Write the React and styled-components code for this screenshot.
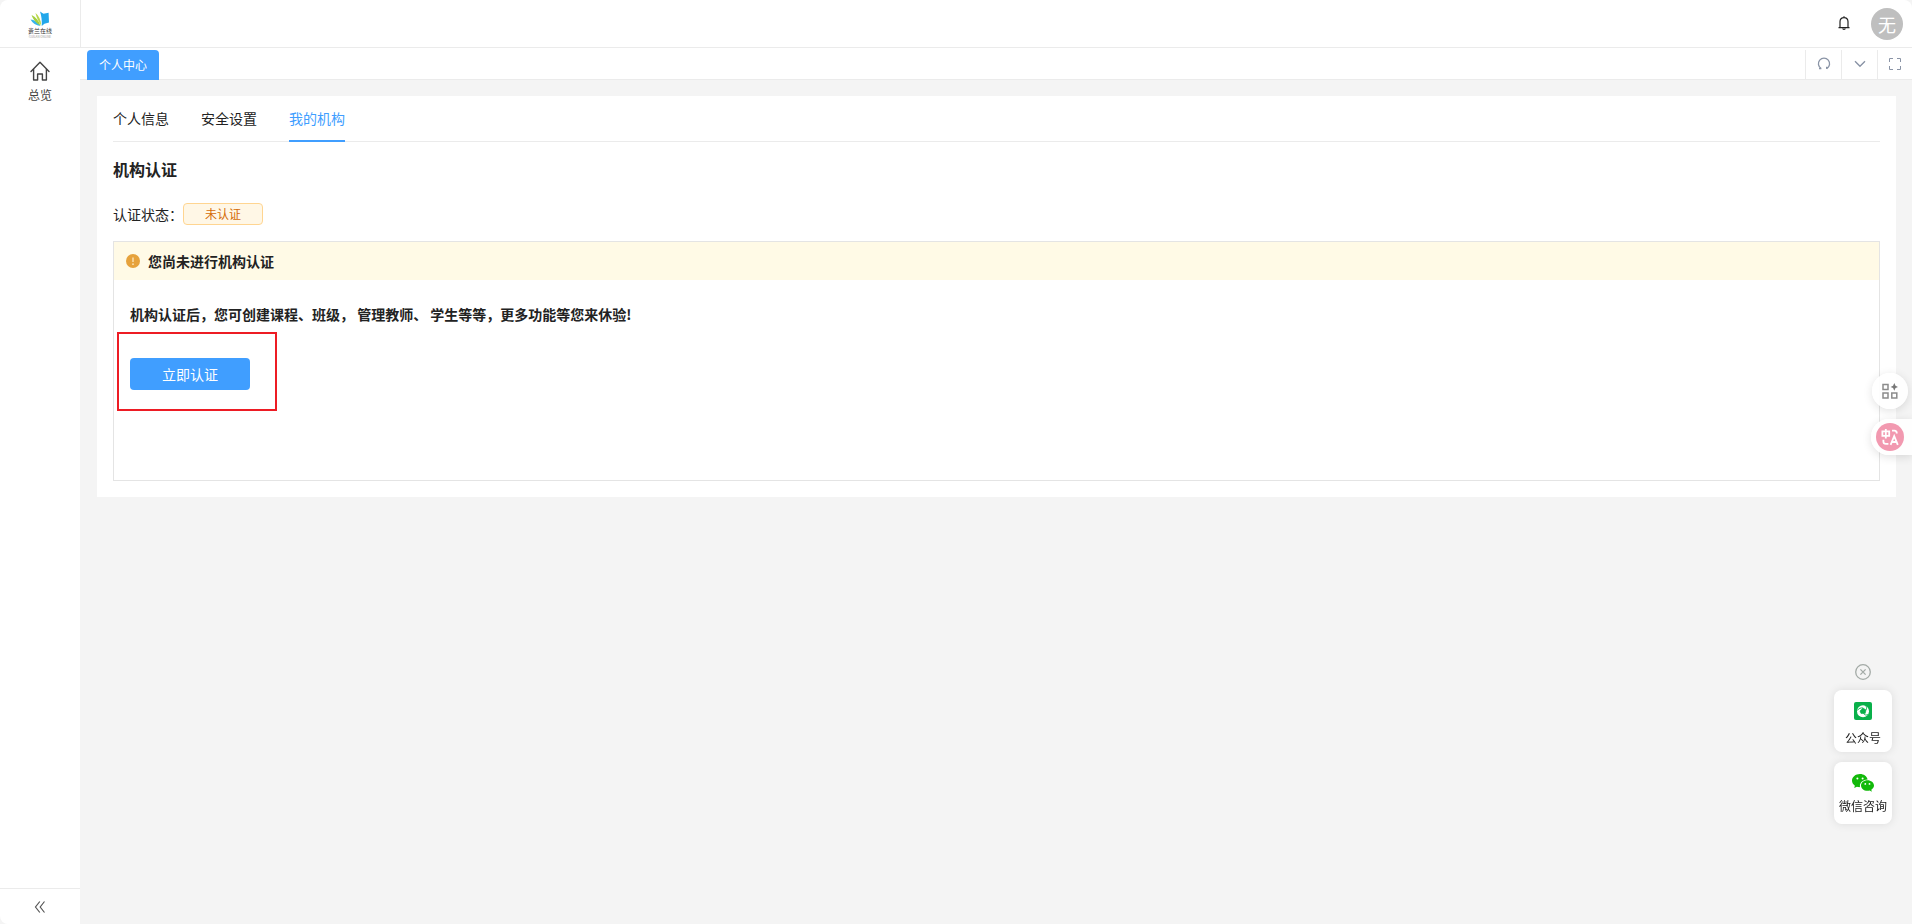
import styled, { createGlobalStyle } from "styled-components";

const tools = [
	{ name: "刷新", icon: <RefreshIcon /> },
	{ name: "更多", icon: <ChevronIcon /> },
	{ name: "全屏", icon: <FullscreenIcon /> },
];

const tabs = ["个人信息", "安全设置", "我的机构"];

const App = () => {
	return (
		<>
			<GlobalStyle />
			<Layout>
				<Sidebar>
					<LogoBox href="#">
						<LogoIcon />
						<LogoName>贵兰在线</LogoName>
						<LogoSub>GUILAN ONLINE</LogoSub>
					</LogoBox>
					<MenuItem href="#">
						<HomeIcon />
						总览
					</MenuItem>
					<CollapseButton aria-label="收起菜单">
						<CollapseIcon />
					</CollapseButton>
				</Sidebar>
				<Main>
					<Header>
						<IconButton aria-label="通知">
							<BellIcon />
						</IconButton>
						<Avatar>无</Avatar>
					</Header>
					<PageBar>
						<PageTab href="#">个人中心</PageTab>
						<Tools>
							{tools.map((tool) => (
								<ToolButton key={tool.name} aria-label={tool.name}>
									{tool.icon}
								</ToolButton>
							))}
						</Tools>
					</PageBar>
					<Content>
						<Card>
							<Tabs>
								{tabs.map((tab) => (
									<Tab key={tab} $active={tab === "我的机构"}>
										{tab}
									</Tab>
								))}
							</Tabs>
							<Title>机构认证</Title>
							<Status>
								认证状态：
								<Tag>未认证</Tag>
							</Status>
							<Panel>
								<Notice>
									<WarningIcon />
									您尚未进行机构认证
								</Notice>
								<PanelBody>
									<Message>
										机构认证后，您可创建课程、班级， 管理教师、 学生等等，更多功能等您来休验!
									</Message>
									<Action>
										<PrimaryButton>立即认证</PrimaryButton>
										<Highlight />
									</Action>
								</PanelBody>
							</Panel>
						</Card>
					</Content>
				</Main>
			</Layout>
			<SideTools>
				<RoundButton aria-label="小工具">
					<AppsIcon />
				</RoundButton>
				<TranslateButton aria-label="翻译">
					<TranslateIcon />
				</TranslateButton>
			</SideTools>
			<Contact>
				<IconButton aria-label="关闭">
					<CloseIcon />
				</IconButton>
				<ContactButton $gap={8}>
					<OfficialIcon />
					公众号
				</ContactButton>
				<ContactButton $gap={4}>
					<WechatIcon />
					微信咨询
				</ContactButton>
			</Contact>
		</>
	);
};

export default App;

function LogoIcon() {
	return (
		<svg width="20" height="16" viewBox="0 0 20 16">
			<path d="M0.5 8.6 C4 9 8 11 10.4 15 C6 14.8 2.500 12.500 0.500 8.600Z" fill="#35b4ea" />
			<path d="M1.600 4 C5.500 6 9 10 10.600 14.600 C6.500 12.500 3 8.500 1.600 4Z" fill="#a4cf3e" />
			<path d="M5.500 2 C8.800 4.600 11 9 11.200 14.400 C8.600 11 6.400 6.500 5.500 2Z" fill="#b9d84a" />
			<path d="M10 0.500 L13.500 2.800 L18.600 1.800 L19 11.600 L14.400 12.800 L11.800 15 C12 10 11.600 5 10 0.500Z" fill="#22a7ea" />
		</svg>
	);
}

function HomeIcon() {
	return (
		<svg width="20" height="20" viewBox="0 0 20 20" fill="none" stroke="#444" strokeWidth="1.4" strokeLinejoin="round" strokeLinecap="round">
			<path d="M1 10.4 L10 1.2 L19 10.4" />
			<path d="M3.6 8.5 V19 H7.6 V13 H12.4 V19 H16.4 V8.5" />
		</svg>
	);
}

function CollapseIcon() {
	return (
		<svg width="12" height="12" viewBox="0 0 12 12" fill="none" stroke="#555" strokeWidth="1.2">
			<path d="M5.8 0.5 L1.5 6 L5.8 11.5 M10.5 0.5 L6.2 6 L10.5 11.5" />
		</svg>
	);
}

function BellIcon() {
	return (
		<svg width="12" height="16" viewBox="0 0 12 16" fill="none" stroke="#222" strokeWidth="1.2">
			<path d="M2 11.400 V5.800 C2 3.200 3.800 1.600 6 1.600 S10 3.200 10 5.800 V11.400 M0.500 11.600 H11.500 M6 0.200 V1.600 M4.600 12.600 C5 13.600 7 13.600 7.400 12.600" />
		</svg>
	);
}

function RefreshIcon() {
	return (
		<svg width="14" height="14" viewBox="0 0 14 14" fill="none" stroke="#8a94a6" strokeWidth="1.3">
			<path d="M4.200 11.600 A5.600 5.600 0 1 1 9.800 11.600 M2 11.700 H4.400 M9.700 9.800 V12" />
		</svg>
	);
}

function ChevronIcon() {
	return (
		<svg width="12" height="8" viewBox="0 0 12 8" fill="none" stroke="#8a94a6" strokeWidth="1.4">
			<path d="M1 1.2 L6 6.2 L11 1.2" />
		</svg>
	);
}

function FullscreenIcon() {
	return (
		<svg width="12" height="12" viewBox="0 0 12 12" fill="none" stroke="#8a94a6" strokeWidth="1">
			<path d="M0.5 4 V0.5 H4 M8 0.5 H11.5 V4 M11.5 8 V11.5 H8 M4 11.5 H0.5 V8" />
		</svg>
	);
}

function WarningIcon() {
	return (
		<svg width="14" height="14" viewBox="0 0 14 14">
			<circle cx="7" cy="7" r="7" fill="#e6a23c" />
			<path d="M7 3.4 V8" stroke="#fbe3b5" strokeWidth="1.4" />
			<circle cx="7" cy="10.2" r="0.9" fill="#fbe3b5" />
		</svg>
	);
}

function AppsIcon() {
	return (
		<svg width="16" height="16" viewBox="0 0 16 16" fill="none" stroke="#8c8c8c" strokeWidth="1.5">
			<path d="M1 1.400 H6 V6.400 H1 Z M1 10 H6 V15 H1 Z M9.800 10 H14.800 V15 H9.800 Z" />
			<path d="M12.300 0 L13.500 2.700 L16 3.900 L13.500 5.100 L12.300 7.800 L11.100 5.100 L8.600 3.900 L11.100 2.700 Z" fill="#777" stroke="none" />
		</svg>
	);
}

function TranslateIcon() {
	return (
		<svg width="28" height="28" viewBox="0 0 28 28" fill="none" stroke="#fff" strokeWidth="1.8">
			<circle cx="14" cy="14" r="14" fill="#f299b0" stroke="none" />
			<path d="M6.400 8.400 H13.200 V12.800 H6.400 Z M9.800 6 V15.600" />
			<path d="M16 7.600 H18.400 Q20.800 7.600 20.800 10.400 M7.400 16.800 V18.400 Q7.400 20.800 10 20.800 H12.400" />
			<path d="M14.600 21.800 L18.200 13.200 L21.800 21.800 M16 19 H20.400" />
		</svg>
	);
}

function CloseIcon() {
	return (
		<svg width="16" height="16" viewBox="0 0 16 16" fill="none" stroke="#a3aaa6" strokeWidth="1.3">
			<circle cx="8" cy="8" r="7.300" />
			<path d="M5.400 5.400 L10.600 10.600 M10.600 5.400 L5.400 10.600" />
		</svg>
	);
}

function OfficialIcon() {
	return (
		<svg width="18" height="18" viewBox="0 0 18 18">
			<rect width="18" height="18" rx="2" fill="#09b04a" />
			<circle cx="9" cy="9.200" r="6" fill="#fff" />
			<path d="M9 6 L12 8 L11.200 11.400 H7 L6 9 Z" fill="#09b04a" stroke="#09b04a" strokeWidth="0.600" strokeLinejoin="round" />
			<path d="M9 6 C7 5.600 4.600 6.400 3.400 8.400 M12 8 C13 6.600 12.600 4.600 11.400 3.400 M9.400 11.400 C10.400 13 12.400 13.600 14.400 12.400" fill="none" stroke="#09b04a" strokeWidth="0.900" />
		</svg>
	);
}

function WechatIcon() {
	return (
		<svg width="22" height="18" viewBox="0 0 22 18" fill="#12b90a">
			<path d="M8 0 C3.500 0 0 2.900 0 6.600 C0 8.700 1.100 10.500 2.900 11.700 L2.200 14 L4.900 12.700 C5.900 13 7 13.200 8 13.100 C7.300 9 10.500 5.500 15.600 5.400 C14.900 2.200 11.800 0 8 0Z" />
			<path d="M15.400 6.200 C11.800 6.200 9 8.600 9 11.500 C9 14.500 11.800 16.800 15.400 16.800 C16.200 16.800 17 16.700 17.700 16.500 L19.800 17.700 L19.300 15.700 C21 14.700 22 13.200 22 11.500 C22 8.600 19 6.200 15.400 6.200Z" />
			<circle cx="5.400" cy="4.600" r="1" fill="#fff" />
			<circle cx="10.600" cy="4.600" r="1" fill="#fff" />
			<circle cx="13.300" cy="9.900" r="0.900" fill="#fff" />
			<circle cx="17.500" cy="9.900" r="0.900" fill="#fff" />
		</svg>
	);
}

const GlobalStyle = createGlobalStyle`
	* {
		box-sizing: border-box;
	}
	body {
		margin: 0;
		background: #f4f4f4;
		color: #222;
		font-family: "Noto Sans CJK SC", sans-serif;
		font-size: 14px;
		line-height: 22px;
	}
	button {
		font: inherit;
		color: inherit;
		border: none;
		background: none;
		padding: 0;
		cursor: pointer;
	}
	a {
		color: inherit;
		text-decoration: none;
	}
	svg {
		display: block;
		flex-shrink: 0;
	}
`;

const Layout = styled.div`
	display: flex;
	min-height: 100vh;
	border-radius: 8px;
	overflow: hidden;
`;

const Sidebar = styled.aside`
	display: flex;
	flex-direction: column;
	width: 80px;
	flex-shrink: 0;
	background: #fff;
`;

const LogoBox = styled.a`
	display: flex;
	flex-direction: column;
	align-items: center;
	height: 48px;
	padding-top: 11px;
	border-bottom: 1px solid #ebebeb;
`;

const LogoName = styled.span`
	font-size: 6px;
	line-height: 8px;
	color: #333;
`;

const LogoSub = styled.span`
	font-size: 3px;
	line-height: 4px;
	color: #999;
`;

const MenuItem = styled.a`
	display: flex;
	flex-direction: column;
	align-items: center;
	gap: 3px;
	padding: 13px 0;
	font-size: 12px;
	color: #444;
`;

const CollapseButton = styled.button`
	display: flex;
	align-items: center;
	justify-content: center;
	height: 36px;
	margin-top: auto;
	border-top: 1px solid #ebebeb;
`;

const Main = styled.div`
	flex: 1;
	min-width: 0;
`;

const Header = styled.header`
	display: flex;
	align-items: center;
	justify-content: flex-end;
	gap: 21px;
	height: 48px;
	padding-right: 9px;
	background: #fff;
	border-left: 1px solid #ebebeb;
	border-bottom: 1px solid #ebebeb;
`;

const IconButton = styled.button`
	display: flex;
`;

const Avatar = styled.span`
	width: 32px;
	height: 32px;
	border-radius: 50%;
	background: #bfbfbf;
	color: #fff;
	font-size: 18px;
	line-height: 32px;
	text-align: center;
`;

const PageBar = styled.nav`
	display: flex;
	justify-content: space-between;
	height: 32px;
	padding: 2px 0 0 7px;
	background: #fff;
	border-bottom: 1px solid #ebebeb;
`;

const PageTab = styled.a`
	height: 30px;
	padding: 0 12px;
	border-radius: 4px 4px 0 0;
	background: #409eff;
	color: #fff;
	font-size: 12px;
	line-height: 30px;
`;

const Tools = styled.div`
	display: flex;
`;

const ToolButton = styled.button`
	display: flex;
	align-items: center;
	justify-content: center;
	width: 36px;
	padding-bottom: 2px;
	border-left: 1px solid #ebebeb;

	&:last-child {
		width: 35px;
	}
`;

const Content = styled.main`
	padding: 16px 16px 16px 17px;
`;

const Card = styled.section`
	padding: 0 16px 16px;
	background: #fff;
`;

const Tabs = styled.div`
	display: flex;
	gap: 32px;
	height: 46px;
	border-bottom: 1px solid #ebebeb;
`;

const Tab = styled.button`
	height: 46px;
	border-bottom: 2px solid ${({ $active }) => ($active ? "#409eff" : "transparent")};
	color: ${({ $active }) => ($active ? "#409eff" : "#222")};
`;

const Title = styled.h1`
	margin: 15px 0 22px;
	font-size: 16px;
	line-height: 24px;
	font-weight: 700;
`;

const Status = styled.div`
	display: flex;
	align-items: center;
	margin-bottom: 16px;
`;

const Tag = styled.span`
	width: 80px;
	border: 1px solid #ffd591;
	border-radius: 4px;
	background: #fff7e6;
	color: #d46b08;
	font-size: 12px;
	line-height: 20px;
	text-align: center;
`;

const Panel = styled.div`
	min-height: 240px;
	border: 1px solid #e4e4e4;
`;

const Notice = styled.div`
	display: flex;
	align-items: center;
	gap: 8px;
	padding: 8px 12px;
	background: #fffae6;
	font-weight: 700;
`;

const PanelBody = styled.div`
	padding: 23px 16px;
`;

const Message = styled.p`
	margin: 0 0 33px;
	font-weight: 700;
`;

const Action = styled.div`
	position: relative;
	width: 120px;
`;

const PrimaryButton = styled.button`
	width: 120px;
	height: 32px;
	border-radius: 4px;
	background: #409eff;
	color: #fff;
`;

const Highlight = styled.div`
	position: absolute;
	inset: -26px -27px -21px -13px;
	border: 2px solid #ed1c24;
	pointer-events: none;
`;

const SideTools = styled.div`
	position: fixed;
	top: 373px;
	right: 0;
	display: flex;
	flex-direction: column;
	align-items: flex-end;
	gap: 10px;
`;

const RoundButton = styled.button`
	display: flex;
	align-items: center;
	justify-content: center;
	width: 36px;
	height: 36px;
	margin-right: 4px;
	border-radius: 50%;
	background: rgba(255, 255, 255, 0.9);
	box-shadow: 0 2px 10px rgba(0, 0, 0, 0.12);
`;

const TranslateButton = styled.button`
	display: flex;
	align-items: center;
	width: 41px;
	height: 36px;
	padding-left: 5px;
	border-radius: 18px 0 0 18px;
	background: rgba(255, 255, 255, 0.9);
	box-shadow: 0 2px 10px rgba(0, 0, 0, 0.12);
`;

const Contact = styled.div`
	position: fixed;
	right: 20px;
	bottom: 100px;
	display: flex;
	flex-direction: column;
	align-items: center;
	gap: 10px;
`;

const ContactButton = styled.button`
	display: flex;
	flex-direction: column;
	align-items: center;
	gap: ${({ $gap }) => $gap}px;
	width: 58px;
	height: 62px;
	padding-top: 12px;
	border-radius: 8px;
	background: #fff;
	box-shadow: 0 0 10px rgba(0, 0, 0, 0.1);
	font-size: 12px;
	line-height: 20px;
`;
